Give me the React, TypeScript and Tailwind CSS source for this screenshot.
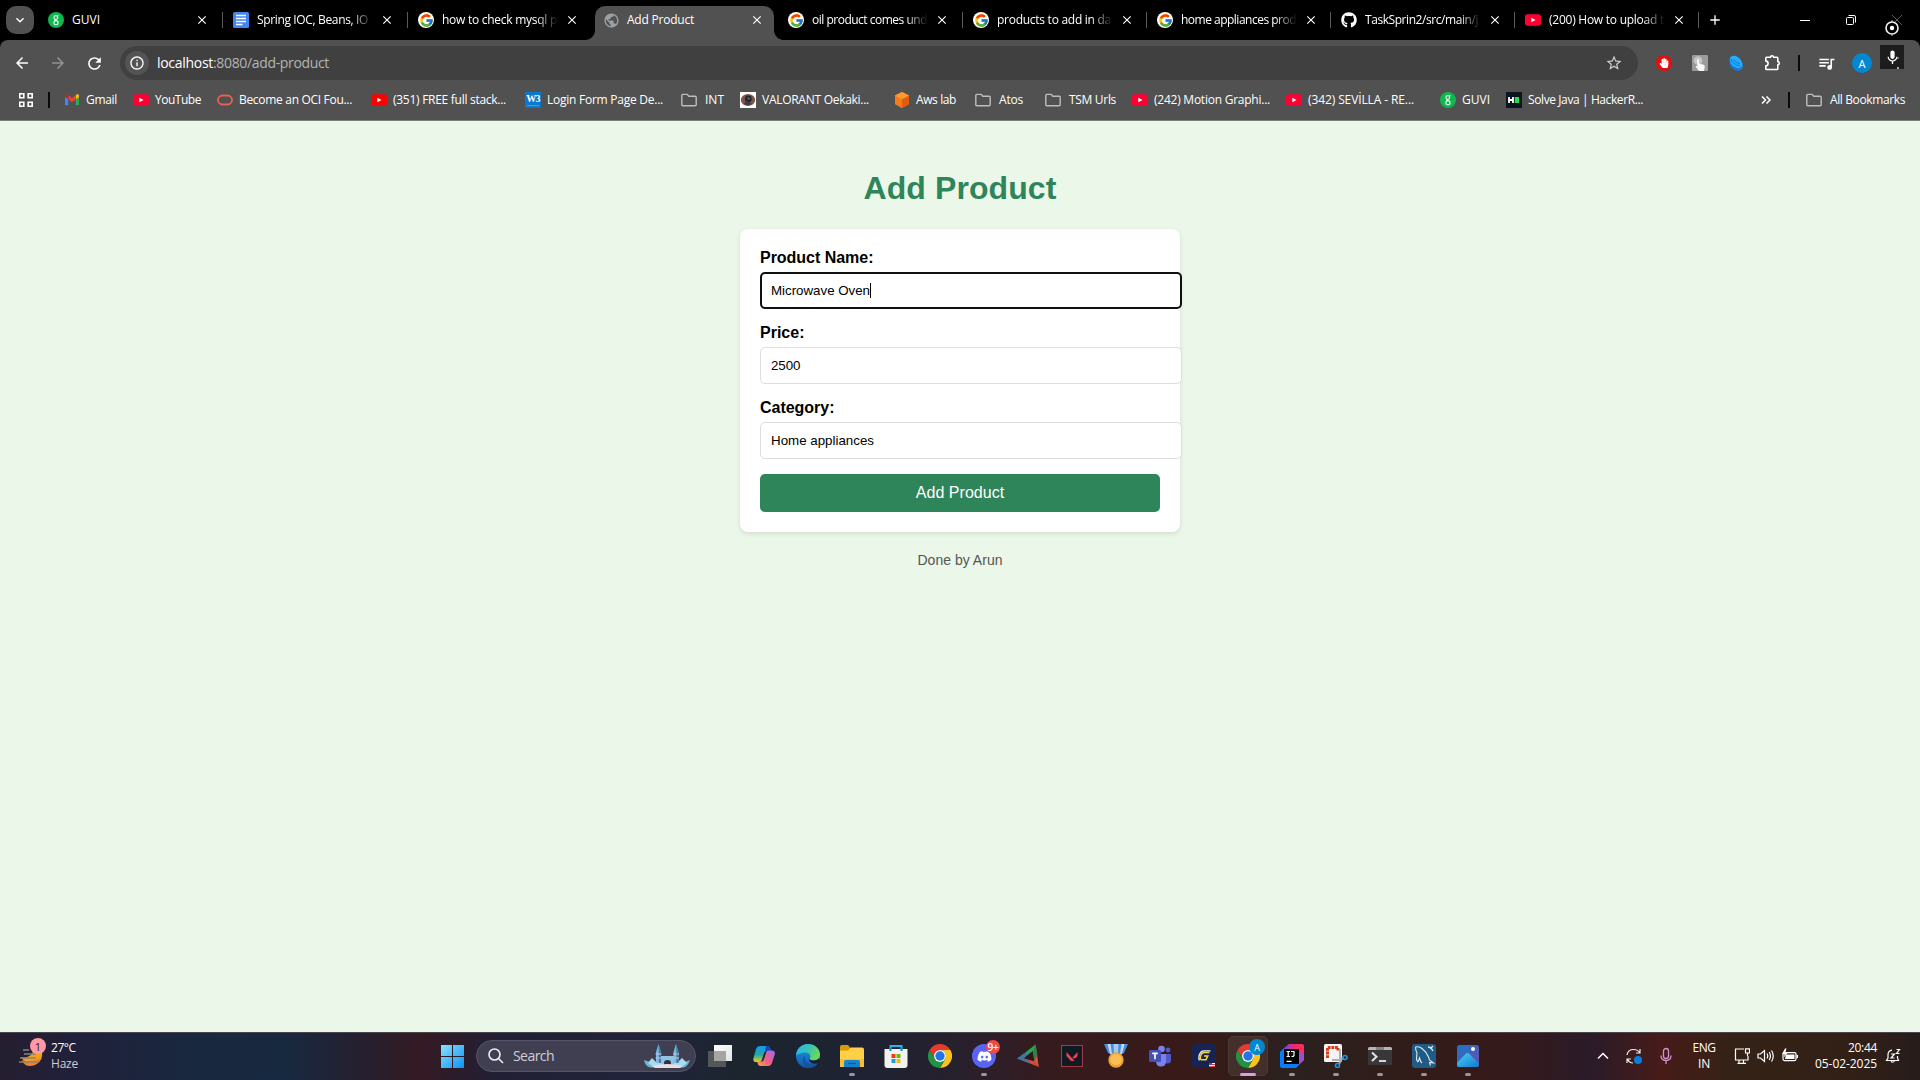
import React, { useLayoutEffect, useRef, useState } from "react";
import { FcGoogle } from "react-icons/fc";
import { FaGithub, FaDiscord, FaHandPaper } from "react-icons/fa";
import {
  MdArrowBack,
  MdArrowForward,
  MdRefresh,
  MdInfoOutline,
  MdStarBorder,
  MdQueueMusic,
  MdClose,
  MdExpandMore,
  MdAdd,
  MdPublic,
  MdMic,
} from "react-icons/md";

/** Single-line text whose tracking is tuned so that it spans exactly `width` pixels. */
function Fit({ width, className = "", children }: { width: number; className?: string; children: React.ReactNode }) {
  const ref = useRef<HTMLSpanElement>(null);
  const [spacing, setSpacing] = useState(0);
  useLayoutEffect(() => {
    const el = ref.current;
    if (!el) return;
    const natural = el.getBoundingClientRect().width;
    const count = (el.textContent || "").length;
    setSpacing((width - natural) / count);
  }, [width]);
  return (
    <span ref={ref} className={`inline-block shrink-0 whitespace-pre ${className}`} style={{ letterSpacing: spacing }}>
      {children}
    </span>
  );
}

/* ---------- small icons ---------- */

const Guvi = () => (
  <svg viewBox="0 0 16 16" className="size-4 shrink-0">
    <circle cx="8" cy="8" r="8" fill="#10b750" />
    <g fill="none" stroke="#dff7e7" strokeWidth="1.1">
      <circle cx="7.8" cy="5.500" r="1.9" />
      <path d="M9.200 4.200l1.200-.8M7 7.300c-.8 1 .2 1.200 1 1.300" />
      <circle cx="8" cy="10.700" r="2.100" />
    </g>
  </svg>
);

const Docs = () => (
  <svg viewBox="0 0 16 16" className="size-4 shrink-0">
    <rect width="16" height="16" rx="1.5" fill="#4285f4" />
    <path d="M3 3.500h10M3 6.500h10M3 9.500h10M3 12.500h6.500" stroke="#fff" strokeWidth="1.500" />
  </svg>
);

const Google = () => (
  <span className="flex size-4 shrink-0 items-center justify-center rounded-full bg-white">
    <FcGoogle className="size-[15px]" />
  </span>
);

const YouTube = ({ dark = false }: { dark?: boolean }) => (
  <svg viewBox="0 0 16 16" className="size-4 shrink-0">
    <rect y="2.300" width="16" height="11.400" rx="2.600" fill={dark ? "#ff0000" : "#ff0033"} />
    <path d="M6.300 5.700v4.600L10.500 8z" fill="#fff" />
  </svg>
);

const Gmail = () => (
  <svg viewBox="0 0 14 12" className="h-3 w-[14px] shrink-0">
    <path d="M0 2v8.500q0 .8.800.8H3.200V4.500z" fill="#4285f4" />
    <path d="M14 2v8.500q0 .8-.8.800h-2.400V4.500z" fill="#34a853" />
    <path d="M10.800 1.100v4.200L14 3V1.800C14 .3 12.500-.2 11.500.6z" fill="#fbbc04" />
    <path d="M3.200 5.300V1.100L7 4l3.800-2.900v4.200L7 8.200z" fill="#ea4335" />
    <path d="M0 1.800V3l3.200 2.300V1.100L2.500.6C1.500-.2 0 .3 0 1.800z" fill="#c5221f" />
  </svg>
);

const Oracle = () => (
  <svg viewBox="0 0 16 16" className="size-4 shrink-0">
    <rect x="1" y="3.500" width="14" height="9" rx="4.500" fill="none" stroke="#e8604f" strokeWidth="1.900" />
  </svg>
);

const W3 = () => (
  <span className="flex size-4 shrink-0 flex-col items-center bg-[#0a78cc] font-['Liberation_Serif',serif] text-[10px] leading-[13px] font-bold tracking-[-0.800px] text-white">
    W3
    <span className="h-px w-3 bg-[#4a9ddb]" />
  </span>
);

const Folder = () => (
  <svg viewBox="0 0 16 16" className="size-4 shrink-0">
    <path d="M.8 3.400q0-1 1-1h4.400l1.600 1.900h6.400q1 0 1 1v7.400q0 1-1 1H1.800q-1 0-1-1z" fill="none" stroke="#bdbdbd" strokeWidth="1.400" />
  </svg>
);

const Valo = () => (
  <svg viewBox="0 0 16 16" className="size-4 shrink-0">
    <rect width="16" height="16" fill="#fff" />
    <ellipse cx="8" cy="8" rx="7.200" ry="5.900" fill="#7b5647" />
    <circle cx="8.300" cy="7" r="3.400" fill="#24262e" />
    <path d="M4 12l2.500-4 2 2.500L12 11.500q-4 3-8 .5z" fill="#3a3b45" />
    <path d="M7 5.500l3 .5-1 2z" fill="#737b8c" />
  </svg>
);

const Aws = () => (
  <svg viewBox="0 0 16 16" className="size-4 shrink-0">
    <path d="M8 0l7 3.600v8.500L8 16l-7-3.900V3.600z" fill="#f58220" />
    <path d="M1 3.600L8 7v9l-7-3.900z" fill="#f47b1e" />
    <path d="M15 3.600L8 7v9l7-3.900z" fill="#e05c10" />
    <path d="M8 0l7 3.600L8 7 1 3.600z" fill="#ff9a2e" />
  </svg>
);

const Hacker = () => (
  <svg viewBox="0 0 16 16" className="size-4 shrink-0">
    <rect width="16" height="16" fill="#0e141e" />
    <path d="M3 5v6M7 5v6M3 8h4" stroke="#fff" strokeWidth="1.800" />
    <rect x="8.800" y="5" width="4.200" height="6" fill="#1fe05b" />
  </svg>
);

/* ---------- browser tabs ---------- */

type Tab = { icon: React.ReactNode; title: string; w: number; active?: boolean; noSep?: boolean; faded?: boolean; size: string };

const tabs: Tab[] = [
  { icon: <Guvi />, title: "GUVI", w: 28, size: "w-[185px]" },
  { icon: <Docs />, title: "Spring IOC, Beans, IO", w: 111, faded: true, size: "w-[185px]" },
  { icon: <Google />, title: "how to check mysql p", w: 115, noSep: true, faded: true, size: "w-[185px]" },
  {
    icon: <MdPublic className="size-[17px] shrink-0 text-[#9aa0a6]" />,
    title: "Add Product",
    w: 67,
    active: true,
    noSep: true,
    size: "w-[185px]",
  },
  { icon: <Google />, title: "oil product comes und", w: 115, faded: true, size: "w-[185px]" },
  { icon: <Google />, title: "products to add in da", w: 114, faded: true, size: "w-[184px]" },
  { icon: <Google />, title: "home appliances prod", w: 115, faded: true, size: "w-[184px]" },
  { icon: <FaGithub className="size-4 shrink-0 text-white" />, title: "TaskSprin2/src/main/j", w: 113, faded: true, size: "w-[184px]" },
  { icon: <YouTube />, title: "(200) How to upload t", w: 115, faded: true, size: "w-[184px]" },
];

function TabItem({ tab }: { tab: Tab }) {
  return (
    <div className={`relative h-10 shrink-0 ${tab.size}`}>
      {tab.active && (
        <div className="absolute top-[6px] right-1 bottom-0 left-[2px] rounded-t-[10px] bg-[#515151]">
          <div className="absolute bottom-0 -left-[10px] size-[10px] bg-[radial-gradient(circle_at_0_0,#000_9.500px,#515151_10.500px)]" />
          <div className="absolute -right-[10px] bottom-0 size-[10px] bg-[radial-gradient(circle_at_100%_0,#000_9.500px,#515151_10.500px)]" />
        </div>
      )}
      <div className="relative flex h-full items-center pl-[10px]">
        <div className="flex w-6 shrink-0 items-center">{tab.icon}</div>
        <div
          className={
            tab.faded
              ? "flex w-[116px] [mask-image:linear-gradient(to_right,#000_94px,transparent_116px)]"
              : "flex w-[116px]"
          }
        >
          <Fit width={tab.w} className="text-[12px] leading-4 text-white">
            {tab.title}
          </Fit>
        </div>
        <MdClose className="ml-[7px] size-[14px] shrink-0 text-white" />
        {!tab.noSep && <div className="ml-auto h-4 w-[1.500px] bg-[#5a5a5a]" />}
      </div>
    </div>
  );
}

function TabStrip() {
  return (
    <div className="flex h-10 bg-black">
      <div className="mt-[6px] ml-[6px] flex size-7 shrink-0 items-center justify-center rounded-[10px] bg-[#515151]">
        <MdExpandMore className="size-4 text-white" />
      </div>
      <div className="ml-1 flex">
        {tabs.map((t) => (
          <TabItem key={t.title} tab={t} />
        ))}
      </div>
      <div className="flex w-8 items-center justify-center">
        <MdAdd className="size-4 text-white" />
      </div>
      <div className="ml-auto flex">
        <div className="flex w-[46px] items-center justify-center">
          <div className="h-px w-[10px] bg-white" />
        </div>
        <div className="flex w-[46px] items-center justify-center">
          <svg viewBox="0 0 10 10" className="size-[10px] overflow-visible" fill="none" stroke="#fff">
            <rect x=".5" y="2.500" width="7" height="7" rx="1" />
            <path d="M2.500.5H8q1.500 0 1.500 1.500v5.500" />
          </svg>
        </div>
        <div className="relative flex w-[46px] items-center justify-center">
          <svg viewBox="0 0 10 10" className="size-[10px]" stroke="#5c5c5c" fill="none">
            <path d="M0 0l10 10M10 0L0 10" />
          </svg>
          <svg viewBox="0 0 16 16" className="absolute top-5 left-[10px] size-4">
            <circle cx="8" cy="8" r="6" fill="#000" stroke="#f2f2f2" strokeWidth="1.600" />
            <circle cx="8" cy="8" r="2.200" fill="#fff" />
            <path d="M8 0v2M8 14v2" stroke="#bbb" strokeWidth="1" />
          </svg>
        </div>
      </div>
    </div>
  );
}

/* ---------- toolbar ---------- */

function Toolbar() {
  return (
    <div className="flex h-[46px] items-start pt-[6px]">
      <div className="flex h-[34px] w-[120px] items-center pl-1">
        <div className="flex w-9 justify-center"><MdArrowBack className="size-[18px] text-white" /></div>
        <div className="flex w-9 justify-center"><MdArrowForward className="size-[18px] text-[#929292]" /></div>
        <div className="flex w-9 justify-center"><MdRefresh className="size-[19px] text-white" /></div>
      </div>
      <div className="flex h-[34px] w-[1518px] items-center rounded-full bg-[#404040] pl-[5px]">
        <div className="flex size-6 items-center justify-center rounded-full bg-[#545454]">
          <MdInfoOutline className="size-4 text-white" />
        </div>
        <div className="ml-2 flex text-[14px] leading-5">
          <Fit width={56} className="text-white">localhost</Fit>
          <Fit width={116} className="text-[#b4b4b4]">:8080/add-product</Fit>
        </div>
        <MdStarBorder className="mr-[15px] ml-auto size-[18px] text-[#d0d0d0]" />
      </div>
      <div className="ml-2 flex h-[34px] items-center">
        <div className="flex w-9 justify-center">
          <span className="flex size-4 items-center justify-center rounded-full bg-[#e40d12]">
            <FaHandPaper className="size-[10px] text-white" />
          </span>
        </div>
        <div className="flex w-9 justify-center">
          <svg viewBox="0 0 16 16" className="size-4">
            <rect width="16" height="16" rx="1" fill="#9b9b9b" />
            <circle cx="6" cy="5.500" r="4.300" fill="#c4c4c4" />
            <path d="M5 4.500q1.500-1 2 .5v3.500l4.500 1.200q1.500.5 1.300 2L12 16H7L3.500 11.500l1-.8 1 .8z" fill="#f6f9fb" />
          </svg>
        </div>
        <div className="flex w-9 justify-center">
          <svg viewBox="0 0 16 16" className="size-4">
            <ellipse cx="8.300" cy="9.300" rx="7.200" ry="5.600" transform="rotate(42 8.300 9.300)" fill="#1b7fe0" />
            <ellipse cx="8" cy="6.900" rx="7.200" ry="5" transform="rotate(42 8 6.900)" fill="#22aefc" />
            <path d="M3 4q1 5 9 7M5.500 4.500q2 3.500 6.500 4.300M1.200 8q2 5.500 9 6.500" fill="none" stroke="#0f6fd0" strokeWidth=".9" />
          </svg>
        </div>
        <div className="flex w-9 justify-center">
          <svg viewBox="0 0 18 18" className="size-[18px]" fill="none" stroke="#fff" strokeWidth="1.600">
            <path
              strokeLinejoin="round"
              d="M2.800 4q0-.8.800-.8H7.500a1.500 1.500 0 0 1 3 0H14q.8 0 .8.800V7.700a1.500 1.500 0 0 1 0 3V14.700q0 .8-.8.800H3.600q-.8 0-.8-.8V11.700a2.300 2.300 0 0 0 0-4.600z"
            />
          </svg>
        </div>
        <div className="flex w-[18px] justify-center"><div className="h-4 w-[2px] bg-[#0a0a0a]" /></div>
        <div className="flex w-9 justify-center"><MdQueueMusic className="size-[19px] text-white" /></div>
        <div className="flex w-9 justify-center">
          <span className="flex size-5 items-center justify-center rounded-full bg-[#0288d1] text-[11px] leading-none text-white">A</span>
        </div>
        <div className="relative -mt-3 flex size-6 items-center justify-center bg-[#1d1d1d]">
          <MdMic className="size-[17px] text-white" />
          <span className="absolute top-[12px] right-[5px] size-[2px] rounded-full bg-[#888]" />
          <span className="absolute right-[5px] bottom-0 size-[2px] rounded-full bg-[#ddd]" />
        </div>
      </div>
    </div>
  );
}

/* ---------- bookmarks ---------- */

const bookmarks: { icon: React.ReactNode; label: string; slot: string; w: number; gap: string }[] = [
  { icon: <Gmail />, label: "Gmail", slot: "w-[68px]", w: 31, gap: "gap-[7px]" },
  { icon: <YouTube />, label: "YouTube", slot: "w-[84px]", w: 46, gap: "gap-[6px]" },
  { icon: <Oracle />, label: "Become an OCI Fou...", slot: "w-[154px]", w: 113, gap: "gap-[6px]" },
  { icon: <YouTube dark />, label: "(351) FREE full stack...", slot: "w-[154px]", w: 113, gap: "gap-[6px]" },
  { icon: <W3 />, label: "Login Form Page De...", slot: "w-[156px]", w: 116, gap: "gap-[6px]" },
  { icon: <Folder />, label: "INT", slot: "w-[59px]", w: 19, gap: "gap-2" },
  { icon: <Valo />, label: "VALORANT Oekaki...", slot: "w-[154px]", w: 107, gap: "gap-[6px]" },
  { icon: <Aws />, label: "Aws lab", slot: "w-[81px]", w: 40, gap: "gap-[6px]" },
  { icon: <Folder />, label: "Atos", slot: "w-[70px]", w: 24, gap: "gap-2" },
  { icon: <Folder />, label: "TSM Urls", slot: "w-[87px]", w: 47, gap: "gap-2" },
  { icon: <YouTube />, label: "(242) Motion Graphi...", slot: "w-[154px]", w: 116, gap: "gap-[6px]" },
  { icon: <YouTube />, label: "(342) SEVİLLA - RE...", slot: "w-[154px]", w: 106, gap: "gap-[6px]" },
  { icon: <Guvi />, label: "GUVI", slot: "w-[66px]", w: 28, gap: "gap-[6px]" },
  { icon: <Hacker />, label: "Solve Java | HackerR...", slot: "w-[154px]", w: 115, gap: "gap-[6px]" },
];

function Bookmarks() {
  return (
    <div className="flex h-[35px] items-start text-[12px] leading-4 text-white">
      <div className="flex h-7 w-full items-center">
        <svg viewBox="0 0 14 14" className="ml-[19px] size-[14px]" fill="none" stroke="#fff" strokeWidth="1.600">
          <path d="M.8.8h4v4h-4zM9.200.8h4v4h-4zM.8 9.200h4v4h-4zM9.200 9.200h4v4h-4z" />
        </svg>
        <div className="mr-[15px] ml-[15px] h-4 w-[2px] bg-[#0a0a0a]" />
        {bookmarks.map((b, i) => (
          <div key={i} className={`flex shrink-0 items-center ${b.slot} ${b.gap}`}>
            {b.icon}
            <Fit width={b.w}>{b.label}</Fit>
          </div>
        ))}
        <svg viewBox="0 0 10 8" className="ml-auto h-2 w-[10px]" fill="none" stroke="#fff" strokeWidth="1.500">
          <path d="M1 .5L4.500 4 1 7.500M5.500.5L9 4 5.500 7.500" />
        </svg>
        <div className="mr-4 ml-[17px] h-4 w-[2px] bg-[#0a0a0a]" />
        <div className="mr-[15px] flex items-center gap-2">
          <Folder />
          <Fit width={75}>All Bookmarks</Fit>
        </div>
      </div>
    </div>
  );
}

/* ---------- page ---------- */

function Field({ label, value, labelW, valueW, focused }: { label: string; value: string; labelW: number; valueW: number; focused?: boolean }) {
  return (
    <div className="mb-[15px]">
      <div className="mb-[5px] flex h-[18px] items-center text-[16px] leading-[18px] font-bold text-black">
        <Fit width={labelW}>{label}</Fit>
      </div>
      <div
        className={
          focused
            ? "flex h-[37px] w-[422px] items-center rounded-[5px] border-2 border-[#101010] bg-white pl-[9px]"
            : "flex h-[37px] w-[422px] items-center rounded-[5px] border border-[#dddddd] bg-white pl-[10px]"
        }
      >
        <Fit width={valueW} className="text-[13.330px] leading-[15px] text-black">{value}</Fit>
        {focused && <div className="h-[15px] w-px bg-black" />}
      </div>
    </div>
  );
}

function ProductPage() {
  return (
    <main className="flex flex-1 flex-col items-center bg-[#ebf7e9] font-['Liberation_Sans',Arial,sans-serif]">
      <h1 className="mt-[49px] flex text-[32px] leading-[36px] font-bold text-[#2f855a]">
        <Fit width={193}>Add Product</Fit>
      </h1>
      <div className="mt-[23px] h-[303px] w-[440px] rounded-lg bg-white p-5 shadow-[0_2px_5px_rgba(0,0,0,0.1)]">
        <Field label="Product Name:" value="Microwave Oven" labelW={113.500} valueW={99} focused />
        <Field label="Price:" value="2500" labelW={44.500} valueW={29.500} />
        <Field label="Category:" value="Home appliances" labelW={74.500} valueW={103} />
        <button className="flex h-[38px] w-full items-center justify-center rounded-[5px] bg-[#2f855a] pb-px text-[16px] text-white">
          <Fit width={88.500}>Add Product</Fit>
        </button>
      </div>
      <p className="mt-5 text-[14px] leading-4 text-[#555555]">
        <Fit width={85}>Done by Arun</Fit>
      </p>
    </main>
  );
}

/* ---------- taskbar ---------- */

const Chrome = () => (
  <svg viewBox="0 0 24 24" className="size-6">
    <path d="M12 6H22.400A12 12 0 0 0 1.600 6L6.800 15A6 6 0 0 1 12 6z" fill="#e33b2e" />
    <path d="M17.200 15L12 24A12 12 0 0 0 22.400 6H12A6 6 0 0 1 17.200 15z" fill="#fcc31e" />
    <path d="M6.800 15L1.600 6A12 12 0 0 0 12 24L17.200 15A6 6 0 0 1 6.800 15z" fill="#229342" />
    <circle cx="12" cy="12" r="6" fill="#fff" />
    <circle cx="12" cy="12" r="4.700" fill="#2374e8" />
  </svg>
);

const TaskView = () => (
  <svg viewBox="0 0 24 24" className="size-6">
    <defs>
      <linearGradient id="tvw" x1="0" y1="0" x2="1" y2="1"><stop stopColor="#fff" /><stop offset="1" stopColor="#e2e2e2" /></linearGradient>
    </defs>
    <path d="M6 1h18v16H6z" fill="url(#tvw)" />
    <path d="M0 7h18v16H0z" fill="#5c5c5c" fillOpacity=".9" />
    <path d="M6 7h12v10H6z" fill="#a5a5a5" />
  </svg>
);

const Copilot = () => (
  <svg viewBox="0 0 24 24" className="size-6">
    <defs>
      <linearGradient id="cpa" x1="0" y1="0" x2="0" y2="1"><stop stopColor="#1697f0" /><stop offset=".55" stopColor="#22a9a0" /><stop offset="1" stopColor="#f0d21c" /></linearGradient>
      <linearGradient id="cpb" x1="1" y1="0" x2="0" y2="1"><stop stopColor="#a06af5" /><stop offset=".5" stopColor="#ec5b8c" /><stop offset="1" stopColor="#ff9b4a" /></linearGradient>
    </defs>
    <path d="M8 2h7.500q2 0 2.600 2l.9 3h-4.500q-1.500 0-2 1.500L10 16q-.7 2-2.700 2H4.500Q.5 18 1.500 14L4 5q1-3 4-3z" fill="url(#cpa)" />
    <path d="M14 2h1.500q2 0 2.600 2l.9 3h-4.500q-1 0-1.500.8z" fill="#1346b8" />
    <path d="M16 22H8.500q-2 0-2.600-2L5 17.500h4.500q1.500 0 2-1.500L14 8.500Q14.700 6.500 16.700 6.500h3q4 0 3 4L20 19q-1 3-4 3z" fill="url(#cpb)" />
    <path d="M12.300 8.500L10.200 15.500q-.3 1-1 1.500h.5q1.500 0 2-1.500l2.300-7.500z" fill="#28202c" />
  </svg>
);

const Edge = () => (
  <svg viewBox="0 0 24 24" className="size-6">
    <defs>
      <linearGradient id="ega" x1="0" y1="0" x2="1" y2=".4"><stop stopColor="#2fb4ee" /><stop offset=".55" stopColor="#34c4b4" /><stop offset="1" stopColor="#6ad858" /></linearGradient>
      <linearGradient id="egb" x1="0" y1="0" x2="0" y2="1"><stop stopColor="#1e9be5" /><stop offset="1" stopColor="#0f57ad" /></linearGradient>
    </defs>
    <circle cx="12" cy="12" r="12" fill="url(#egb)" />
    <path d="M0 11.500C.5 5 5.500 0 12 0c7 0 12 5 12 10.500 0 4-3 6-6.500 6-3 0-4.500-1.200-3.700-2.200 1.800-2.300-.3-5.800-4.300-5.800-4 0-8 1.500-9.500 3z" fill="url(#ega)" />
    <path d="M9 11c-1.500 5 2.500 9.500 7 9.500 2.500 0 4.500-.8 6-1.500-2.500 4-6.500 5-10 5-5-1-7-9-3-13z" fill="#1552a0" />
    <path d="M13.800 14.300c-.8 1 .7 2.200 3.700 2.200 2 0 4-.7 5.300-2.200L24 17l-1.500 2c-4 1.500-9 .5-9.500-3.500z" fill="#1b2030" />
  </svg>
);

const Explorer = () => (
  <svg viewBox="0 0 24 24" className="size-6">
    <path d="M0 3q0-2 2-2h6l2 2.500V8H0z" fill="#d99a08" />
    <path d="M0 6.500h8L10.500 3.500H22q2 0 2 2V22H0z" fill="#ffcf48" />
    <path d="M0 15h24v8H0z" fill="#f9c035" />
    <path d="M4 23v-5q0-2 2-2h12q2 0 2 2v5z" fill="#1583d0" />
    <path d="M8 19.500h8" stroke="#0c5b9c" strokeWidth="1.200" />
  </svg>
);

const Store = () => (
  <svg viewBox="0 0 24 24" className="size-6">
    <path d="M6.500 6V2h11v4" fill="none" stroke="#29b2ee" strokeWidth="2" />
    <path d="M.5 5h23v16q0 3-3 3h-17q-3 0-3-3z" fill="#f1f1f1" />
    <path d="M6.500 7V4M17.500 7V4" stroke="#1685c8" strokeWidth="2" />
    <path d="M7.500 10h4v4h-4z" fill="#f03a17" />
    <path d="M12.500 10h4v4h-4z" fill="#6fb900" />
    <path d="M7.500 15h4v4h-4z" fill="#159fe8" />
    <path d="M12.500 15h4v4h-4z" fill="#fdb409" />
  </svg>
);

const Triangle = () => (
  <svg viewBox="0 0 24 24" className="size-6">
    <path d="M1 14.500L20 1l-4 6.500L8 14z" fill="#2d7fb8" />
    <path d="M10 8L19.500.5 20.500 8 18 16l-1-9-7 4z" fill="#26a94c" />
    <path d="M19.500.5L21 8l1.500 14-4-5.500-1.500-9z" fill="#3f7a45" />
    <path d="M1 14.500L23 23l-5-6-10-2.500z" fill="#d84a3c" />
    <path d="M20.500 12L23 23l-5-6z" fill="#e5503f" />
    <path d="M1 14.500l7-5 3 .5-3 4.500 5 2.500v2z" fill="#3d74a0" />
    <path d="M16.500 8.500l1.200 8.500L9 14.300z" fill="#281a20" />
  </svg>
);

const Valorant = () => (
  <svg viewBox="0 0 24 24" className="size-6">
    <rect x="1.500" y="1.500" width="21" height="21" fill="#111a22" stroke="#a33a48" />
    <path d="M6.500 8v4l4.500 5h3.500z" fill="#f5404f" />
    <path d="M17.500 8v4l-2 2.300h-3.500z" fill="#f5404f" />
  </svg>
);

const Medal = () => (
  <svg viewBox="0 0 24 24" className="size-6">
    <path d="M0 0h24L20 9l-6 3h-4L4 9z" fill="#4a8ee0" />
    <path d="M3.500 0h3L8 10.500l-2-1zM20.500 0h-3L16 10.500l2-1z" fill="#c4dcf5" />
    <path d="M9.500 0h5l-.5 9h-4z" fill="#a5c8ee" />
    <circle cx="12" cy="16" r="7.700" fill="#f0a02e" />
    <circle cx="12" cy="15.500" r="5.800" fill="#fbbd55" />
  </svg>
);

const Teams = () => (
  <svg viewBox="0 0 24 24" className="size-6">
    <circle cx="13.500" cy="5" r="3.300" fill="#7b83eb" />
    <circle cx="20" cy="6" r="2.400" fill="#5059c9" />
    <path d="M17 10h6v6.500q0 3-3.500 3H17z" fill="#5059c9" />
    <path d="M8 10h10v7q0 5.500-5 5.500T8 17z" fill="#7b83eb" />
    <rect x="1" y="6" width="12" height="12" rx="1.200" fill="#464eb8" />
    <path d="M4.200 9.300h5.600M7 9.300v6" stroke="#fff" strokeWidth="1.700" />
  </svg>
);

const GApp = () => (
  <svg viewBox="0 0 24 24" className="size-6">
    <rect width="24" height="24" rx="4" fill="#172350" />
    <path d="M17.500 8.500H12q-2 0-3.300 3-1.200 4.300 1.300 4.300h4l1.700-3.800h-3.700" fill="none" stroke="#f3d23c" strokeWidth="1.600" />
    <path d="M18.500 6.800H12q-3.500 0-5 5-.5 3 .5 4.500" fill="none" stroke="#e9edf5" strokeWidth="1.300" />
    <path d="M17 19h6v4h-6z" fill="#f3f3f3" />
    <path d="M17 20.500h6M17 22.500h6" stroke="#e04050" />
    <path d="M17 19h3v2h-3z" fill="#3558b0" />
  </svg>
);

const Intellij = () => (
  <svg viewBox="0 0 24 24" className="size-6">
    <defs>
      <linearGradient id="ij" x1="0" y1="0" x2="1" y2="0"><stop stopColor="#6a45f0" /><stop offset=".5" stopColor="#f0286e" /><stop offset="1" stopColor="#ff2d5a" /></linearGradient>
    </defs>
    <path d="M9 0h13q2 0 2 2v14L15 21 4 12V4z" fill="url(#ij)" />
    <path d="M0 8l4-4 1 15 19-3-8 8H2q-2 0-2-2z" fill="#087cfa" />
    <path d="M24 9v7l-6 5V8z" fill="#9a50c8" />
    <rect x="4" y="5" width="15" height="15" fill="#000" />
    <path d="M6.500 7.500h3.500M8.200 7.500v5M6.500 12.500h3.500M11 7.500h3v4q0 1-2.500 1M6.500 17.300h5" stroke="#fff" strokeWidth="1.200" fill="none" />
  </svg>
);

const Snip = () => (
  <svg viewBox="0 0 24 24" className="size-6">
    <rect width="18" height="18" rx="1.500" fill="#f5f5f5" />
    <path d="M3.500 14V3.500H14v3" fill="none" stroke="#d83b1a" strokeWidth="3" strokeDasharray="2.800 .8" />
    <path d="M16 5v9l4 1M8 16h9l-2 4" fill="none" stroke="#a9b0b5" strokeWidth="2" />
    <circle cx="21" cy="13.500" r="2" fill="none" stroke="#1b98e0" strokeWidth="1.600" />
    <circle cx="13.500" cy="21.500" r="2" fill="none" stroke="#1b98e0" strokeWidth="1.600" />
  </svg>
);

const Terminal = () => (
  <svg viewBox="0 0 24 24" className="size-6">
    <rect y="3" width="24" height="18" rx="1.500" fill="#383838" />
    <path d="M0 6V4.500Q0 3 1.500 3h21Q24 3 24 4.500V6z" fill="#b5b5b5" />
    <path d="M8 3h8v3H8z" fill="#858585" />
    <path d="M4 8.500l4.500 4.200L4 17" fill="none" stroke="#e2e2e2" strokeWidth="2" />
    <path d="M11 17h7" stroke="#fff" strokeWidth="1.600" />
  </svg>
);

const MySql = () => (
  <svg viewBox="0 0 24 24" className="size-6">
    <rect width="24" height="24" rx="3" fill="#1f5b85" />
    <path d="M3.500 3q4-1 7 2 4 3 6 8l1 3 4 3-4-.5 1 3M3.500 3q0 3 1.500 6l-.5 6q1 4 2 2l1-3q1 4 2.500 5" fill="none" stroke="#dfe9f0" strokeWidth="1.100" />
    <path d="M16 3q3 0 5 4M19 4l2-2" fill="none" stroke="#dfe9f0" strokeWidth="1.300" />
  </svg>
);

const Photos = () => (
  <svg viewBox="0 0 24 24" className="size-6">
    <defs>
      <linearGradient id="pha" x1="0" y1="0" x2="1" y2="1"><stop stopColor="#1976c8" /><stop offset="1" stopColor="#6a4ea8" /></linearGradient>
      <linearGradient id="phb" x1="0" y1="0" x2="1" y2="1"><stop stopColor="#45d4f5" /><stop offset="1" stopColor="#1378d0" /></linearGradient>
    </defs>
    <rect x="1" y="1" width="22" height="22" rx="2.500" fill="url(#pha)" />
    <path d="M1 19L9.500 10q2-2 4 0L23 19.500V21q0 2-2 2H3q-2 0-2-2z" fill="url(#phb)" />
    <circle cx="17" cy="5" r="2" fill="#fff" />
  </svg>
);

const apps: { icon: React.ReactNode; running?: boolean; active?: boolean; badge?: string }[] = [
  { icon: <TaskView /> },
  { icon: <Copilot /> },
  { icon: <Edge /> },
  { icon: <Explorer />, running: true },
  { icon: <Store /> },
  { icon: <Chrome /> },
  {
    icon: (
      <span className="flex size-6 items-center justify-center rounded-full bg-[#5865f2]">
        <FaDiscord className="size-[15px] text-white" />
      </span>
    ),
    running: true,
    badge: "9+",
  },
  { icon: <Triangle /> },
  { icon: <Valorant /> },
  { icon: <Medal /> },
  { icon: <Teams /> },
  { icon: <GApp /> },
  { icon: <Chrome />, active: true, badge: "A" },
  { icon: <Intellij />, running: true },
  { icon: <Snip />, running: true },
  { icon: <Terminal />, running: true },
  { icon: <MySql />, running: true },
  { icon: <Photos />, running: true },
];

const Castle = () => (
  <svg viewBox="0 0 46 26" className="h-[26px] w-[46px]">
    <path d="M0 17q5 2 8 2h30q4 0 8-2-2 6-6 7.500H6Q1 23 0 17z" fill="#6eb4d6" />
    <path d="M4 20l4-5 4 4 4-4h14l4 4 4-4 5 5-4 3H8z" fill="#a6dcec" />
    <path d="M12 20V9l2.500-8L17 9v11zM29.500 20V9L32 1l2.500 8v11z" fill="#78b9de" />
    <path d="M14.500 1L17 9v11h-2zM32 1l2.500 8v11h-2z" fill="#3a7fb0" />
    <path d="M11.500 11h6M29 11h6M11.500 15h6M29 15h6" stroke="#e4b9cf" />
    <path d="M17 13h13v10H17z" fill="#8fc5e2" />
    <path d="M20 23v-3q0-3 3.500-3t3.500 3v3z" fill="#35313f" />
    <path d="M8 23q15-4 31 0l-3 2H11z" fill="#e8dfe6" />
  </svg>
);

function Taskbar() {
  return (
    <footer className="flex h-12 items-center border-t border-[#4b464d] bg-[linear-gradient(90deg,#251e30_0px,#21203a_70px,#18283f_190px,#172940_280px,#25202f_360px,#341a23_420px,#211f34_500px,#20243b_650px,#1c252e_740px,#1e2233_860px,#28202d_960px,#361b1e_1050px,#381a17_1200px,#2b211f_1290px,#321b18_1430px,#351a1b_1510px,#2a1b29_1590px,#471b19_1660px,#352216_1730px,#322017_1850px,#271c1b_1920px)] pb-px font-['Open_Sans','Noto_Sans',sans-serif] text-white">
      <div className="flex w-[430px] items-center pl-[18px]">
        <div className="relative h-6 w-[33px]">
          <svg viewBox="0 0 26 20" className="absolute top-[3px] left-0 h-5 w-[26px]">
            <path d="M3 10q4 2 10-2l3-5 8 1q1.500 9-5.500 13-9 3-15.500-7z" fill="#f5a01c" />
            <path d="M4 13q8 3 19-2-3 8-11 8-6 0-8-6z" fill="#f58220" />
            <path d="M5 3h6M6 7h12M2 11h16M1 15h20" stroke="#85827f" strokeWidth="1.700" />
          </svg>
          <span className="absolute -top-[6px] left-3 flex size-4 items-center justify-center rounded-full bg-[#ff99a4] text-[11px] leading-none text-[#35161c]">1</span>
        </div>
        <div className="flex flex-col text-[12px] leading-4">
          <Fit width={26}>27°C</Fit>
          <Fit width={27} className="text-[#d0cdd3]">Haze</Fit>
        </div>
      </div>
      <div className="flex w-11 justify-center">
        <svg viewBox="0 0 23 23" className="size-[23px]">
          <defs>
            <linearGradient id="win" x1="0" y1="0" x2="1" y2="1"><stop stopColor="#8ae0fd" /><stop offset="1" stopColor="#0c93f5" /></linearGradient>
          </defs>
          <path d="M0 0h11v11H0zM12 0h11v11H12zM0 12h11v11H0zM12 12h11v11H12z" fill="url(#win)" />
        </svg>
      </div>
      <div className="mr-[2px] ml-[2px] flex h-8 w-[220px] items-center rounded-full border border-[#56546a] bg-[#403f52] pr-[5px] pl-[11px]">
        <svg viewBox="0 0 16 16" className="size-4" fill="none" stroke="#ededf0" strokeWidth="1.600">
          <circle cx="6.500" cy="6.500" r="5.500" />
          <path d="M10.500 10.500L15 15" />
        </svg>
        <Fit width={41} className="ml-[9px] text-[14px] leading-5 text-[#cfced6]">Search</Fit>
        <div className="ml-auto"><Castle /></div>
      </div>
      <div className="flex">
        {apps.map((a, i) => (
          <div key={i} className="relative flex h-[46px] w-11 items-center justify-center">
            {a.active && <div className="absolute inset-x-[2px] top-[3px] bottom-[3px] rounded-[5px] border border-[#4a3835] bg-[#43302d]" />}
            <div className="relative">{a.icon}</div>
            {a.badge === "9+" && (
              <span className="absolute top-[7px] left-6 flex size-[14px] items-center justify-center rounded-full bg-[#f04747] text-[10px] leading-none font-semibold tracking-[-0.300px]">9+</span>
            )}
            {a.badge === "A" && (
              <span className="absolute top-[6px] right-[5px] flex size-4 items-center justify-center rounded-full bg-[#0288d1] text-[9px] leading-none">A</span>
            )}
            {a.running && <div className="absolute bottom-[3px] h-[3px] w-[6px] rounded-full bg-[#9c9498]" />}
            {a.active && <div className="absolute bottom-[3px] h-[3px] w-4 rounded-full bg-[#d99fe6]" />}
          </div>
        ))}
      </div>
      <div className="ml-auto flex items-center">
        <svg viewBox="0 0 12 8" className="mr-[16px] h-2 w-3" fill="none" stroke="#fff" strokeWidth="1.500"><path d="M1 6.500l5-5 5 5" /></svg>
        <svg viewBox="0 0 18 18" className="mr-[17px] size-[18px]" fill="none" stroke="#eee" strokeWidth="1.200">
          <path d="M2 8Q3 2.500 8.500 2.500 13 2.500 15 6M15 2v4h-4M8 16Q4 16 2.500 12M2 16v-4h4" />
          <circle cx="13" cy="13" r="4" fill="#0a7ee0" stroke="none" />
        </svg>
        <svg viewBox="0 0 12 18" className="mr-4 h-[18px] w-3" fill="none" stroke="#cf93d6" strokeWidth="1.300">
          <rect x="3.500" y="1.500" width="5" height="10" rx="2.500" />
          <path d="M1 8.500q0 5 5 5t5-5M6 13.500V17" />
        </svg>
        <div className="mr-[14px] flex w-[32px] flex-col items-center text-[12px] leading-4">
          <Fit width={23}>ENG</Fit>
          <Fit width={12}>IN</Fit>
        </div>
        <svg viewBox="0 0 16 16" className="mr-[7px] size-4" fill="none" stroke="#fff" strokeWidth="1.200">
          <path d="M10 1H1.500v11H14V8M5 12v3M9.500 12v3M3.500 15.300H12M11.500.8h4V5h-4zM13.500 5v3" />
        </svg>
        <svg viewBox="0 0 18 16" className="mr-[6px] h-4 w-[18px]" fill="none" stroke="#fff" strokeWidth="1.200">
          <path d="M1 6v4h2.500L7.500 13.500v-11L3.500 6zM10 5.500q1.500 2.500 0 5M12.200 4q2.500 4 0 8M14.500 2.500q3.500 5.500 0 11" />
        </svg>
        <svg viewBox="0 0 18 16" className="h-4 w-[18px]">
          <rect x="2" y="4.600" width="13" height="8" rx="1.500" fill="none" stroke="#fff" strokeWidth="1.200" />
          <path d="M5 6.500h8.500v4.500H4z" fill="#fff" />
          <path d="M15.500 7h1.500v3h-1.500z" fill="#fff" />
          <path d="M4 .5L1 6h2.500L3 9.500 7 4H4.500l1-3.500z" fill="#fff" />
        </svg>
        <div className="mr-2 ml-4 flex w-[62px] flex-col items-end text-[12px] leading-4">
          <Fit width={29}>20:44</Fit>
          <Fit width={62}>05-02-2025</Fit>
        </div>
        <svg viewBox="0 0 16 16" className="mr-[19px] size-4" fill="none" stroke="#fff" strokeWidth="1.200">
          <path d="M7 2.200Q3 2.700 3 7v3l-1.500 2.500h12L12.500 10V8M6 13q1.500 2.500 3.500 0M6 6h3.500l-3.500 4h3.500M11.500 1.500h3L11.500 5.500h3" />
        </svg>
      </div>
    </footer>
  );
}

export default function App() {
  return (
    <div className="flex h-[1080px] w-[1920px] flex-col overflow-hidden bg-[#ebf7e9]">
      <header className="h-[121px] shrink-0 border-b border-[#7b817b] bg-black font-['Open_Sans','Noto_Sans',sans-serif]">
        <TabStrip />
        <div className="h-20 rounded-t-lg bg-[#515151]">
          <Toolbar />
          <Bookmarks />
        </div>
      </header>
      <ProductPage />
      <Taskbar />
    </div>
  );
}
